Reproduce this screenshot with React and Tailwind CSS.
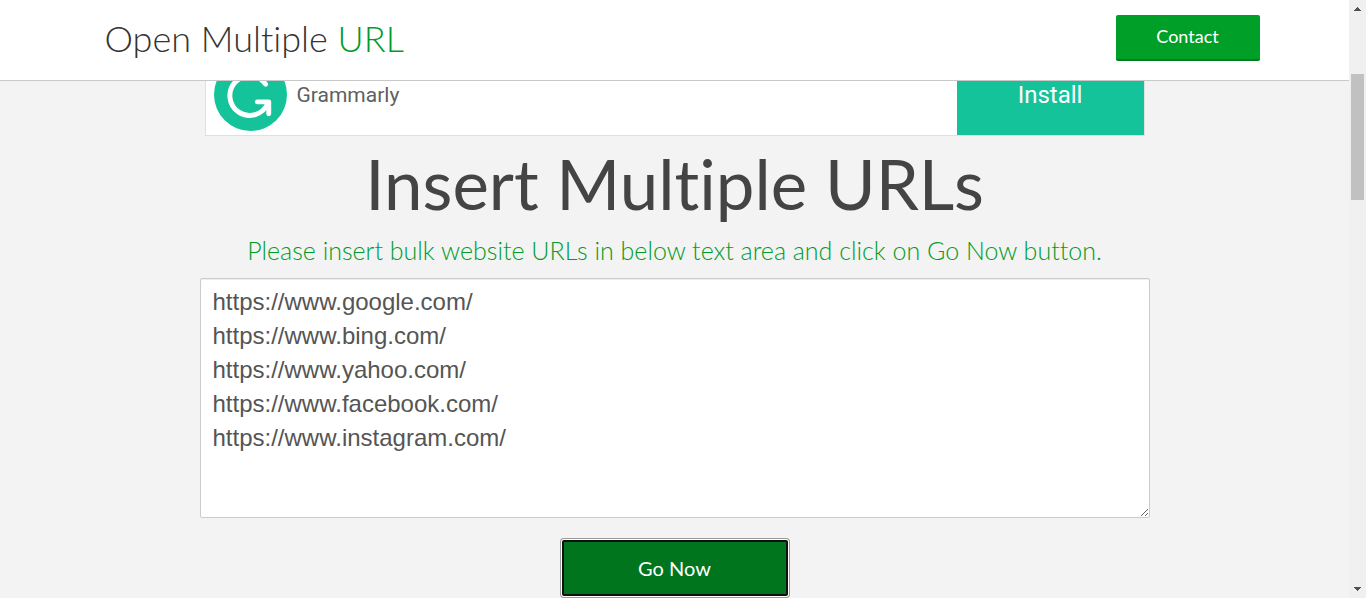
import { useState } from "react";

const initialUrls = [
  "https://www.google.com/",
  "https://www.bing.com/",
  "https://www.yahoo.com/",
  "https://www.facebook.com/",
  "https://www.instagram.com/",
].join("\n");

function GrammarlyLogo() {
  return (
    <svg viewBox="0 0 74 74" className="size-[73px] shrink-0" aria-hidden="true">
      <circle cx="37" cy="37" r="37" fill="#15c39a" />
      <g fill="none" stroke="#fff" strokeWidth="5" strokeLinecap="round" strokeLinejoin="round">
        <path d="M52.3 26.5 A20 20 0 1 0 54.500 46" />
        <path d="M44 44.500 H55.500 V56.500" />
      </g>
    </svg>
  );
}

function Header() {
  return (
    <header className="relative z-10 border-b border-[#c8c8c8] bg-white">
      <div className="mx-auto flex h-20 max-w-[1170px] items-start justify-between pt-[15px] pl-[15px]">
        <a href="#home" className="text-4xl leading-[46px] font-light text-[#333]">
          Open Multiple <span className="text-[#009c27]">URL</span>
        </a>
        <a
          href="#contact"
          className="flex h-[46px] w-36 items-center justify-center rounded-xs border-b-2 border-[#007a1e] bg-[#009f28] pb-0.5 text-lg text-white"
        >
          Contact
        </a>
      </div>
    </header>
  );
}

function AdBanner() {
  return (
    <div className="mx-auto -mt-7 flex h-[83px] w-full max-w-[940px] items-stretch border border-[#e0e0e0] bg-white font-['Roboto',sans-serif]">
      <div className="flex grow items-center gap-2.5 pl-2">
        <GrammarlyLogo />
        <span className="text-[21px] leading-8 text-[#606060]">Grammarly</span>
      </div>
      <a href="#install" className="flex w-[187px] items-center justify-center bg-[#15c39a] text-2xl text-white">
        Install
      </a>
    </div>
  );
}

function ScrollTrack() {
  return (
    <div className="flex w-[17px] shrink-0 flex-col items-center bg-[#f0f0f0]" aria-hidden="true">
      <svg viewBox="0 0 17 17" className="size-[17px]" shapeRendering="crispEdges">
        <path d="M5 11 L8.500 7 L12 11 Z" fill="#505050" />
      </svg>
      <div className="mt-[57px] h-[126px] w-[13px] bg-[#c1c1c1]" />
      <svg viewBox="0 0 17 17" className="mt-auto size-[17px]" shapeRendering="crispEdges">
        <path d="M5 6 L8.500 10 L12 6 Z" fill="#505050" />
      </svg>
    </div>
  );
}

export default function App() {
  const [urls, setUrls] = useState(initialUrls);

  return (
    <div className="flex h-screen overflow-hidden bg-[#f3f3f3] font-['Lato',sans-serif] [font-variant-ligatures:none]">
      <div className="min-w-0 grow">
        <Header />
        <main className="flex flex-col">
          <AdBanner />
          <h1 className="mt-2 text-center text-[69px] leading-[80px] text-[#444]">Insert Multiple URLs</h1>
          <label htmlFor="urls" className="mt-2.5 text-center text-[25px] leading-8 font-light text-[#009c27]">
            Please insert bulk website URLs in below text area and click on Go Now button.
          </label>
          <textarea
            id="urls"
            value={urls}
            onChange={(e) => setUrls(e.target.value)}
            spellCheck={false}
            className="mx-auto mt-3 h-60 w-full max-w-[950px] resize rounded-xs border border-[#ccc] bg-white px-3 py-1.5 font-['Liberation_Sans',sans-serif] text-2xl leading-[34px] text-[#555] shadow-[inset_0_1px_1px_rgba(0,0,0,0.075)]"
          />
          <button
            type="button"
            className="mx-auto mt-[22px] h-14 w-[226px] rounded-xs border-2 border-[#101010] bg-[#00751d] text-xl text-white shadow-[0_0_0_1px_#fff,0_0_0_2px_#999]"
          >
            Go Now
          </button>
        </main>
      </div>
      <ScrollTrack />
    </div>
  );
}
